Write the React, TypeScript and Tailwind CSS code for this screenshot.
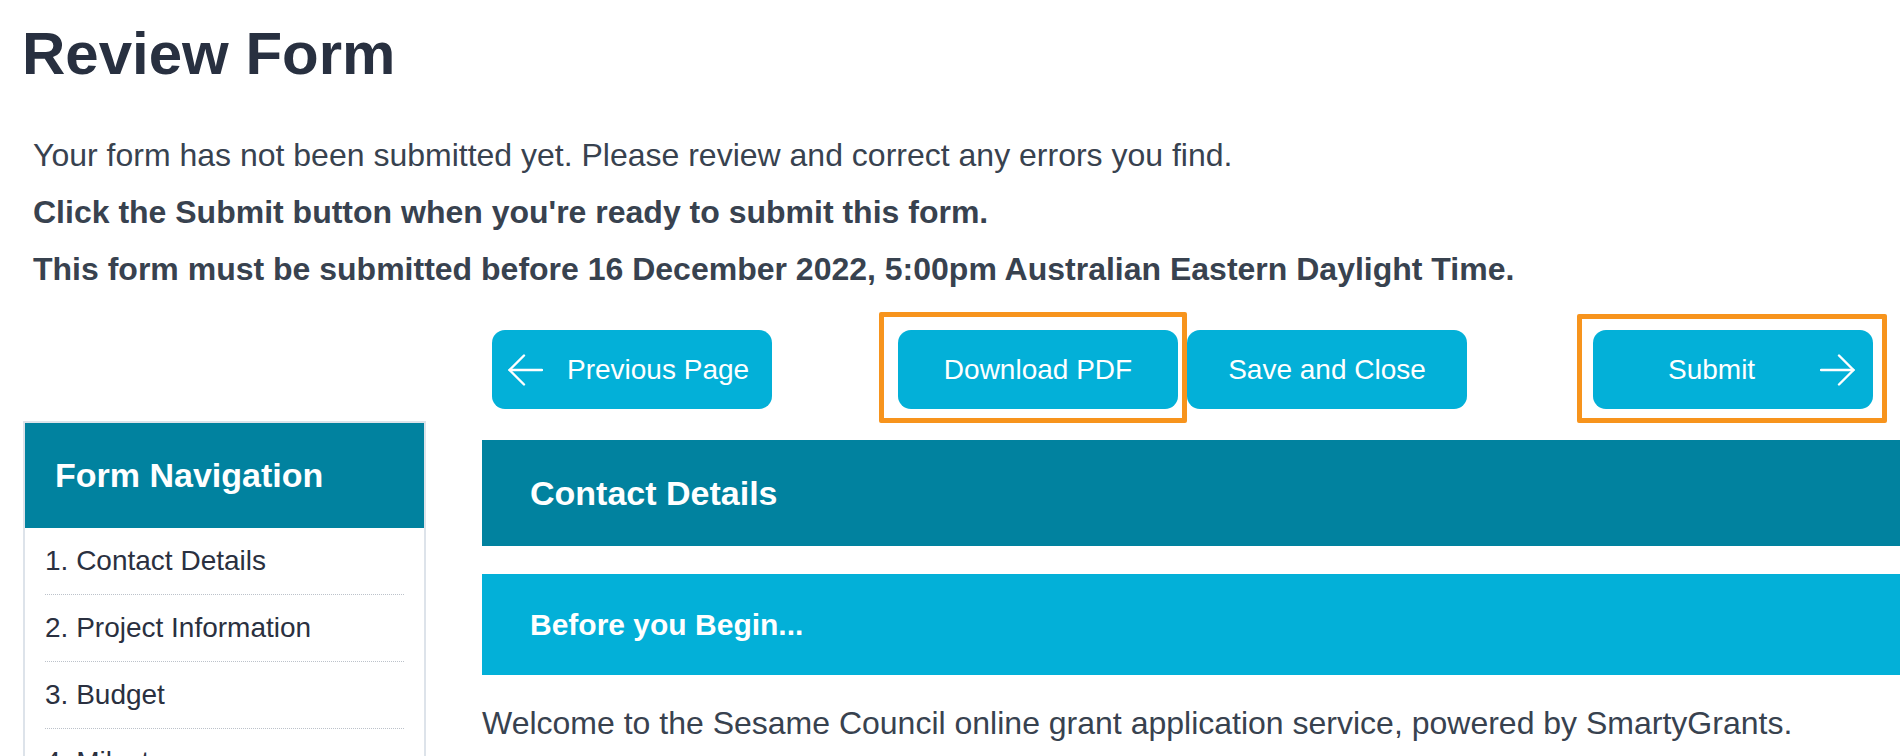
import React from 'react'

// Review form page: title, notes, action buttons, side navigation and first section.

function ArrowLeft() {
  return (
    <svg width="35" height="32" viewBox="0 0 35 32" fill="none" stroke="white" strokeWidth="2.4" strokeLinecap="round" strokeLinejoin="round">
      <path d="M1.5 16 H34" />
      <path d="M16 1.5 L1.5 16 L16 30.5" />
    </svg>
  )
}

function ArrowRight() {
  return (
    <svg width="35" height="32" viewBox="0 0 35 32" fill="none" stroke="white" strokeWidth="2.4" strokeLinecap="round" strokeLinejoin="round">
      <path d="M1 16 H33.5" />
      <path d="M19 1.5 L33.5 16 L19 30.5" />
    </svg>
  )
}

const btn =
  'flex h-[79px] w-[280px] shrink-0 items-center rounded-[13px] bg-[#03b0d8] text-[28px] leading-[32px] text-white'

const navItems = ['1. Contact Details', '2. Project Information', '3. Budget', '4. Milestones']

export default function App() {
  return (
    <div
      className="h-[756px] w-[1900px] overflow-hidden bg-white pl-[20px] pt-[18px]"
      style={{ fontFamily: '"Liberation Sans", Arial, Helvetica, sans-serif' }}
    >
      <h1 className="ml-[2px] text-[60px] font-bold leading-[72px] text-[#283040]">Review Form</h1>

      <div className="mt-[37px] pl-[13px] text-[32px] leading-[57px] text-[#38424f]">
        <p>Your form has not been submitted yet. Please review and correct any errors you find.</p>
        <p className="font-bold">Click the Submit button when you're ready to submit this form.</p>
        <p className="font-bold">
          This form must be submitted before 16 December 2022, 5:00pm Australian Eastern Daylight Time.
        </p>
      </div>

      <div className="flex items-start">
        {/* Form navigation */}
        <aside className="ml-[3px] mt-[123px] w-[403px] shrink-0 border-2 border-[#dde3ea] bg-white">
          <div className="flex h-[105px] items-center bg-[#01829f] pl-[30px]">
            <h2 className="text-[34px] font-bold leading-[39px] text-white">Form Navigation</h2>
          </div>
          <ul className="text-[28px] leading-[32px] text-[#2a3040]">
            {navItems.map((item) => (
              <li key={item} className="mx-5 border-b border-dotted border-[#bcc2ca] py-[17px]">
                {item}
              </li>
            ))}
          </ul>
        </aside>

        {/* Main column */}
        <main className="ml-[56px] min-w-0 flex-1 pt-[32px]">
          <div className="flex items-center">
            <button className={`${btn} ml-[10px] gap-[24px] pl-[16px]`}>
              <ArrowLeft />
              <span>Previous Page</span>
            </button>

            <div className="relative ml-[126px]">
              <div className="pointer-events-none absolute -bottom-[14px] -left-[19px] -right-[9px] -top-[18px] rounded-[2px] border-[5px] border-[#f7941d]" />
              <button className={`${btn} justify-center`}>Download PDF</button>
            </div>

            <button className={`${btn} relative ml-[9px] justify-center`}>Save and Close</button>

            <div className="relative ml-[126px]">
              <div className="pointer-events-none absolute -bottom-[14px] -left-[16px] -right-[14px] -top-[16px] rounded-[2px] border-[5px] border-[#f7941d]" />
              <button className={`${btn} pl-[75px] pr-[18px]`}>
                <span>Submit</span>
                <span className="ml-auto">
                  <ArrowRight />
                </span>
              </button>
            </div>
          </div>

          <div className="mt-[31px] flex h-[106px] items-center bg-[#01829f] pl-[48px]">
            <h2 className="text-[34px] font-bold leading-[39px] text-white">Contact Details</h2>
          </div>

          <div className="mt-[28px] flex h-[101px] items-center bg-[#03b0d8] pl-[48px]">
            <h3 className="text-[30px] font-bold leading-[34px] text-white">Before you Begin...</h3>
          </div>

          <p className="mt-[30px] text-[32px] leading-[37px] text-[#38424f]">
            Welcome to the Sesame Council online grant application service, powered by SmartyGrants.
          </p>
        </main>
      </div>
    </div>
  )
}
